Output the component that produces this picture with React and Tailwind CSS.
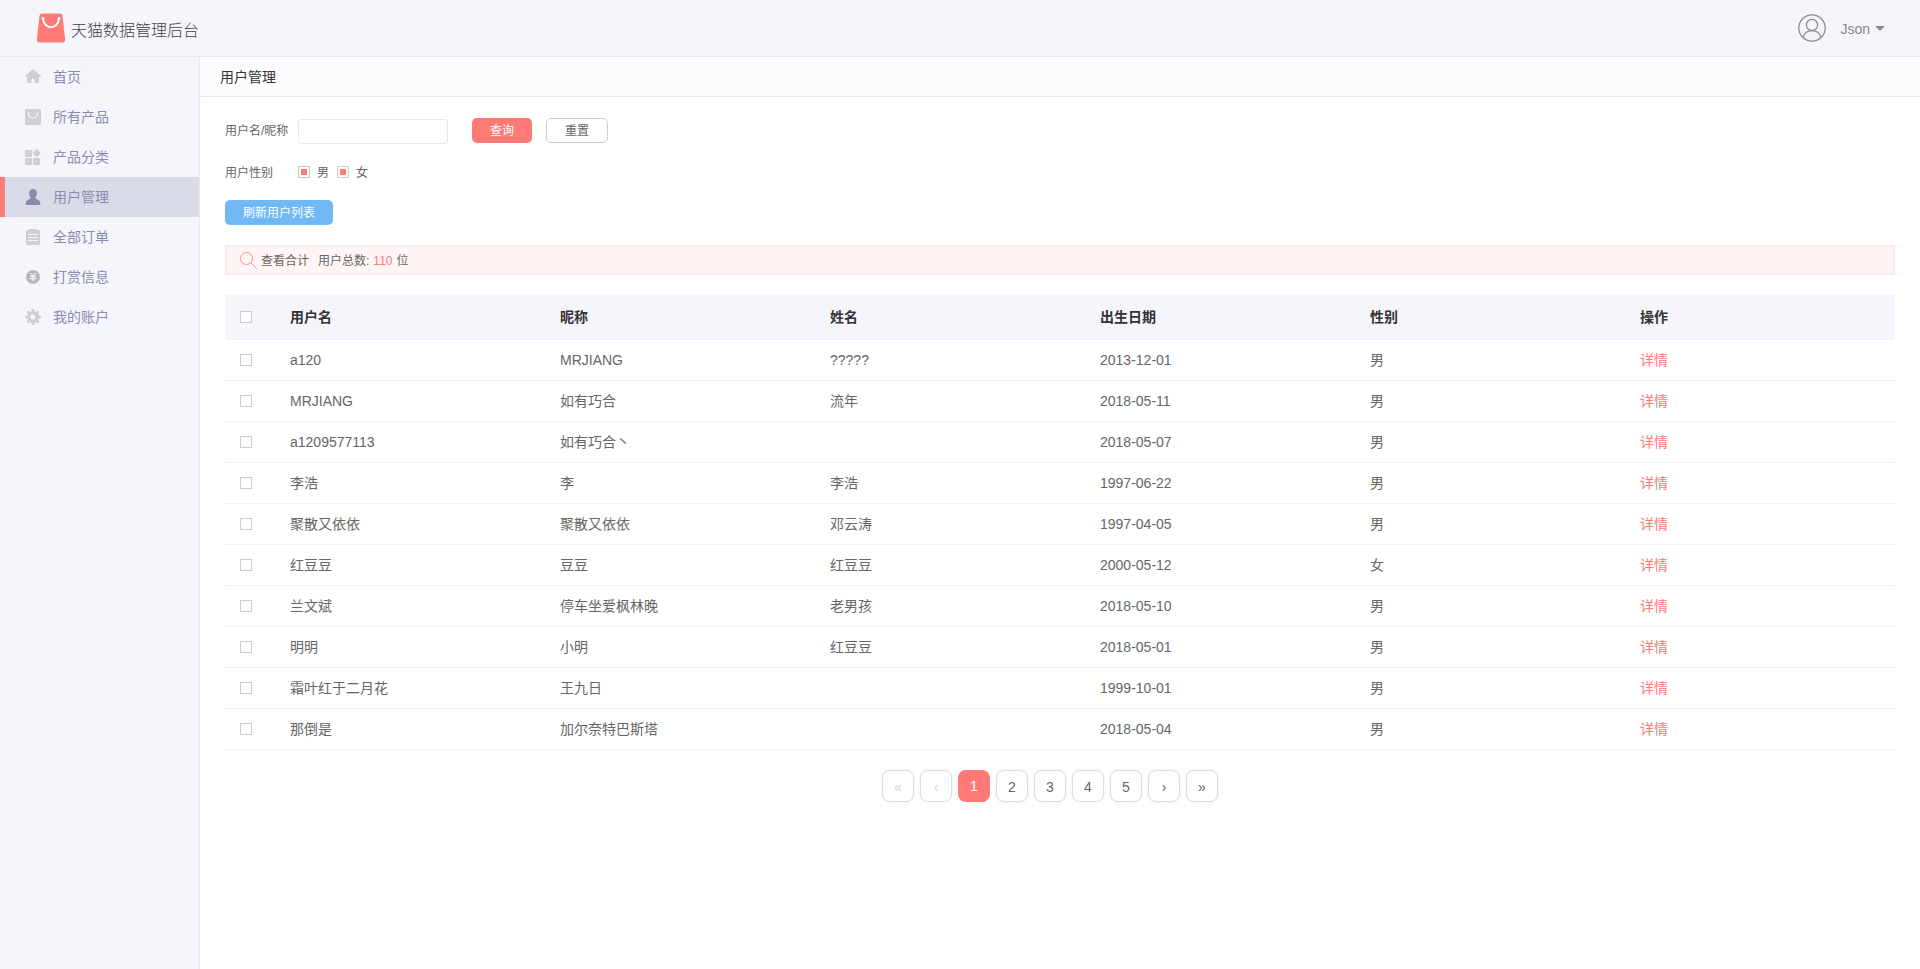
import React from "react";

const NAV = [
  { label: "首页", icon: "home" },
  { label: "所有产品", icon: "bag" },
  { label: "产品分类", icon: "grid" },
  { label: "用户管理", icon: "user", active: true },
  { label: "全部订单", icon: "list" },
  { label: "打赏信息", icon: "yen" },
  { label: "我的账户", icon: "gear" },
];

const USERS = [
  ["a120", "MRJIANG", "?????", "2013-12-01", "男"],
  ["MRJIANG", "如有巧合", "流年", "2018-05-11", "男"],
  ["a1209577113", "如有巧合丶", "", "2018-05-07", "男"],
  ["李浩", "李", "李浩", "1997-06-22", "男"],
  ["聚散又依依", "聚散又依依", "邓云涛", "1997-04-05", "男"],
  ["红豆豆", "豆豆", "红豆豆", "2000-05-12", "女"],
  ["兰文斌", "停车坐爱枫林晚", "老男孩", "2018-05-10", "男"],
  ["明明", "小明", "红豆豆", "2018-05-01", "男"],
  ["霜叶红于二月花", "王九日", "", "1999-10-01", "男"],
  ["那倒是", "加尔奈特巴斯塔", "", "2018-05-04", "男"],
];

const COLUMNS = ["用户名", "昵称", "姓名", "出生日期", "性别", "操作"];

function NavIcon({ name }) {
  return (
    <svg width="16" height="16" viewBox="0 0 16 16" className="shrink-0">
      {name === "home" && (
        <path fill="#cfcfcf" d="M7.3.4a1 1 0 0 1 1.4 0l7 6.300c.5.5.3 1.100-.4 1.100H14V13a1 1 0 0 1-1 1H9.500v-3a1.500 1.500 0 0 0-3 0v3H3a1 1 0 0 1-1-1V7.800H.7c-.7 0-.9-.6-.4-1.100z" />
      )}
      {name === "bag" && (
        <>
          <rect width="16" height="16" rx="1.200" fill="#cfcfcf" />
          <path d="M3.300 3.200c.2 7.400 9.200 7.400 9.400 0" fill="none" stroke="#f5f6fb" strokeWidth="1.100" strokeLinecap="round" />
        </>
      )}
      {name === "grid" && (
        <g fill="#cfcfcf">
          <rect x="0" y="1" width="7" height="7" rx="1" />
          <rect x="0" y="9" width="7" height="7" rx="1" />
          <rect x="8" y="9" width="7" height="7" rx="1" />
          <rect x="8.700" y="1" width="6" height="6" rx=".8" transform="rotate(45 11.700 4)" />
        </g>
      )}
      {name === "user" && (
        <path fill="#8a8baf" d="M8 0a4 4 0 0 1 4 4.200c0 1.800-.8 3-1.700 4 0 1.200.7 1.700 2 2.200 2 .7 3 2 3 4.600 0 .7-.3 1-1 1H1.700c-.7 0-1-.3-1-1 0-2.600 1-3.900 3-4.600 1.300-.5 2-1 2-2.200-.9-1-1.700-2.200-1.700-4A4 4 0 0 1 8 0z" />
      )}
      {name === "list" && (
        <>
          <path fill="#cfcfcf" d="M4 0h8v1h2a1 1 0 0 1 1 1v13a1 1 0 0 1-1 1H2a1 1 0 0 1-1-1V2a1 1 0 0 1 1-1h2z" />
          <path d="M3 5.500h10M3 8.500h10M3 11.500h10" stroke="#f5f6fb" strokeWidth="1" />
        </>
      )}
      {name === "yen" && (
        <>
          <circle cx="8" cy="8" r="7" fill="#b8b8b8" />
          <path d="M5.200 4.200 8 7.200l2.800-3M8 7v5M4.800 7.500h6.400M4.800 9.700h6.400" fill="none" stroke="#f5f6fb" strokeWidth="1.200" />
        </>
      )}
      {name === "gear" && (
        <>
          <g fill="#cfcfcf">
            <circle cx="8" cy="8" r="5.700" />
            <rect x="6.500" y="0" width="3" height="16" rx="1" />
            <rect x="6.500" y="0" width="3" height="16" rx="1" transform="rotate(45 8 8)" />
            <rect x="6.500" y="0" width="3" height="16" rx="1" transform="rotate(90 8 8)" />
            <rect x="6.500" y="0" width="3" height="16" rx="1" transform="rotate(135 8 8)" />
          </g>
          <circle cx="8" cy="8" r="2.600" fill="#f5f6fb" />
        </>
      )}
    </svg>
  );
}

function Check({ checked }) {
  return (
    <span className="flex size-3 shrink-0 items-center justify-center border border-[#ccc] bg-white">
      {checked && <span className="size-1.5 bg-[#ff7975]" />}
    </span>
  );
}

function PageButton({ children, active, disabled }) {
  const tone = active
    ? "bg-[#ff7975] text-white"
    : disabled
      ? "border border-[#ddd] text-[#d5d5d5] pt-0.5 shadow-[0_0_2px_#ddd]"
      : "border border-[#ddd] text-[#666] pt-0.5 shadow-[0_0_2px_#ddd]";
  return (
    <button className={"flex size-8 items-center justify-center rounded-lg text-sm " + tone}>{children}</button>
  );
}

export default function App() {
  return (
    <div className="flex h-[969px] w-full flex-col bg-white font-['Liberation_Sans','Noto_Sans_CJK_SC',sans-serif] text-sm text-[#666]">
      <header className="flex h-[57px] shrink-0 items-center justify-between border-b border-[#e8e8ee] bg-[#f5f6fb] pr-[35px] pl-[36px]">
        <div className="flex items-center">
          <svg width="30" height="30" viewBox="0 0 30 30">
            <path fill="#ff7975" d="M6.500.5h17c1.800 0 2.800.8 3 2.500l2.600 23.200c.2 2-.9 3.300-2.800 3.300H3.700c-1.900 0-3-1.300-2.800-3.300L3.500 3C3.700 1.300 4.700.5 6.500.5z" />
            <path d="M7 5.500c1 11.500 15 11.500 16 0" fill="none" stroke="#fff" strokeWidth="2" strokeLinecap="round" />
            <circle cx="7" cy="5.500" r="1.500" fill="#fff" />
            <circle cx="23" cy="5.500" r="1.500" fill="#fff" />
          </svg>
          <h1 className="pt-[5px] pl-[5px] text-base leading-6 font-light text-[#444]">天猫数据管理后台</h1>
        </div>
        <div className="flex items-center text-[#888]">
          <svg width="28" height="28" viewBox="0 0 28 28" fill="none" stroke="#8c8c8c" strokeWidth="1.300">
            <circle cx="14" cy="14" r="13.200" />
            <circle cx="14" cy="11" r="5.600" />
            <path d="M5 23.500C6.500 18.500 10 16.600 14 16.600s7.500 1.900 9 6.900" />
          </svg>
          <span className="pt-0.5 pl-[14px]">Json</span>
          <svg width="10" height="5" viewBox="0 0 10 5" className="ml-[5px]">
            <path d="M0 0h10L5 5z" fill="#888" />
          </svg>
        </div>
      </header>

      <div className="flex min-h-0 flex-1">
        <nav className="w-[200px] shrink-0 border-r border-[#e8e8ee] bg-[#f5f6fb]">
          {NAV.map((item) => (
            <a
              key={item.label}
              className={
                "flex h-10 items-center gap-3 border-l-[5px] pl-5 text-[#8a8baf] " +
                (item.active ? "border-[#ff7975] bg-[#d9dbe8]" : "border-transparent")
              }
            >
              <NavIcon name={item.icon} />
              <span>{item.label}</span>
            </a>
          ))}
        </nav>

        <main className="min-w-0 flex-1">
          <h2 className="flex h-10 items-center border-b border-[#e8e8ee] bg-[#fcfcff] pl-5 text-[#333]">用户管理</h2>

          <div className="pt-[21px] pr-[25px] pl-[25px]">
            <div className="flex h-[26px] items-center text-xs">
              <label className="w-[73px]">用户名/昵称</label>
              <input className="mt-px h-[25px] w-[150px] rounded-[3px] border border-[#e8e8ee] bg-white" />
              <button className="mb-px ml-6 h-[25px] w-[60px] rounded-[5px] bg-[#ff7975] pt-px text-white">查询</button>
              <button className="mb-px ml-3.5 h-[25px] w-[62px] rounded-[5px] border border-[#ccc] bg-white pt-px">重置</button>
            </div>
            <div className="mt-[18px] flex h-5 items-center text-xs">
              <span className="w-[73px] pt-0.5">用户性别</span>
              <Check checked />
              <span className="mr-[7px] w-5 pt-0.5 pl-[7px] whitespace-nowrap">男</span>
              <Check checked />
              <span className="pt-0.5 pl-[7px]">女</span>
            </div>
            <button className="mt-[18px] block h-[25px] w-[108px] rounded-[5px] bg-[#70b9f4] text-xs text-white">刷新用户列表</button>

            <div className="mt-5 flex h-[30px] items-center border-2 border-[#fbeaea] bg-[#fff5f4] pl-[13px] text-xs">
              <svg width="17" height="17" viewBox="0 0 17 17" fill="none" stroke="#ff8f8b" strokeWidth="1">
                <circle cx="6.500" cy="6.500" r="6" />
                <path d="m11 11 5.500 5.500" />
              </svg>
              <span className="pt-0.5 pl-1">查看合计</span>
              <span className="pt-0.5 pl-[9px]">用户总数:</span>
              <span className="px-1 pt-0.5 text-[#ff7975]">110</span>
              <span className="pt-0.5">位</span>
            </div>

            <table className="mt-5 w-full table-fixed border-separate border-spacing-0 text-left">
              <colgroup>
                <col className="w-[65px]" />
                <col className="w-[270px]" />
                <col className="w-[270px]" />
                <col className="w-[270px]" />
                <col className="w-[270px]" />
                <col className="w-[270px]" />
                <col />
              </colgroup>
              <thead>
                <tr className="h-[45px] bg-[#f5f6fb] text-[#333]">
                  <th className="border-b border-[#f0f0f2] p-0 pl-[15px]"><Check /></th>
                  {COLUMNS.map((c) => (
                    <th key={c} className="border-b border-[#f0f0f2] p-0 font-bold">{c}</th>
                  ))}
                </tr>
              </thead>
              <tbody>
                {USERS.map((row, i) => (
                  <tr key={i} className="h-[41px]">
                    <td className="border-b border-[#f0f0f2] p-0 pl-[15px]"><Check /></td>
                    {row.map((cell, j) => (
                      <td key={j} className="border-b border-[#f0f0f2] p-0">{cell}</td>
                    ))}
                    <td className="border-b border-[#f0f0f2] p-0 text-[#ff7975]">详情</td>
                  </tr>
                ))}
              </tbody>
            </table>

            <div className="mt-5 flex justify-center gap-1.5 pr-[20px]">
              <PageButton disabled>«</PageButton>
              <PageButton disabled>‹</PageButton>
              <PageButton active>1</PageButton>
              <PageButton>2</PageButton>
              <PageButton>3</PageButton>
              <PageButton>4</PageButton>
              <PageButton>5</PageButton>
              <PageButton>›</PageButton>
              <PageButton>»</PageButton>
            </div>
          </div>
        </main>
      </div>
    </div>
  );
}
